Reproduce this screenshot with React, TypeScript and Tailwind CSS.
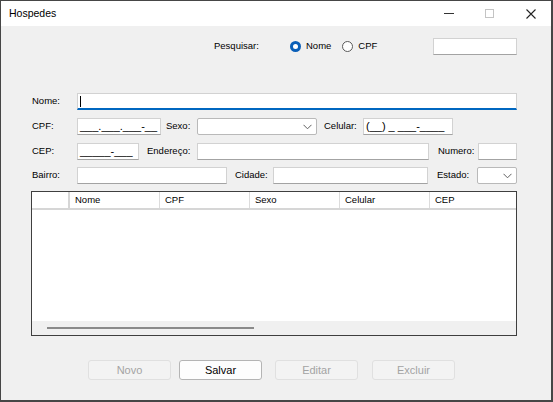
import { ReactNode } from "react"

function Box({ className = "", children }: { className?: string; children?: ReactNode }) {
  return (
    <div className={`h-[17px] bg-white border border-[#d2d2d2] border-b-[#a3a3a3] flex items-center overflow-hidden ${className}`}>
      {children}
    </div>
  )
}

function Combo({ className = "" }: { className?: string }) {
  return (
    <div className={`h-[17px] bg-white border border-[#b9b9b9] rounded-[2px] flex items-center justify-end pr-[4px] ${className}`}>
      <svg width="9" height="6" viewBox="0 0 9 6" fill="none">
        <polyline points="0.5,0.8 4.5,4.8 8.5,0.8" stroke="#606060" strokeWidth="1" />
      </svg>
    </div>
  )
}

function Mask({ text }: { text: string }) {
  return <span className="pl-[2px] text-[11px] leading-none text-black whitespace-pre">{text}</span>
}

function Radio({ checked, label }: { checked: boolean; label: string }) {
  return (
    <div className="flex items-center">
      {checked ? (
        <div className="w-[11px] h-[11px] rounded-full bg-[#0a5fb8] flex items-center justify-center">
          <div className="w-[5px] h-[5px] rounded-full bg-white" />
        </div>
      ) : (
        <div className="w-[11px] h-[11px] rounded-full border border-[#5a5a5a] bg-white" />
      )}
      <span className="ml-[5px]">{label}</span>
    </div>
  )
}

function Btn({ label, enabled = false, className = "" }: { label: string; enabled?: boolean; className?: string }) {
  return (
    <div
      className={`${enabled ? "bg-[#fdfdfd] border-[#b4b4b4] text-black" : "bg-[#f3f3f3] border-[#e0e0e0] text-[#a3a3a3]"} w-[83px] h-[20px] border rounded-[3px] flex items-center justify-center text-[11px] ${className}`}
    >
      {label}
    </div>
  )
}

const columns = ["Nome", "CPF", "Sexo", "Celular", "CEP"]

export default function App() {
  return (
    <div className="w-[553px] h-[402px] bg-[#f0f0f0] border-l border-t border-r-2 border-b-2 border-[#464646] flex flex-col text-[9.5px] text-black font-['Liberation_Sans',Arial,sans-serif]">
      <div className="h-[25px] bg-white flex items-center">
        <span className="pl-[8px] text-[10.5px]">Hospedes</span>
        <div className="ml-auto flex">
          <div className="w-[41px] h-[25px] flex items-center justify-center">
            <div className="w-[10px] h-[1px] bg-[#333]" />
          </div>
          <div className="w-[41px] h-[25px] flex items-center justify-center">
            <div className="w-[9px] h-[9px] border border-[#c4c4c4]" />
          </div>
          <div className="w-[41px] h-[25px] flex items-center justify-center">
            <svg width="10" height="10" viewBox="0 0 10 10">
              <path d="M0.5 0.5 L9.5 9.5 M9.5 0.5 L0.5 9.5" stroke="#222" strokeWidth="1.1" />
            </svg>
          </div>
        </div>
      </div>

      <div className="flex-1 flex flex-col pl-[30px] pr-[34px]">
        <div className="mt-[12px] h-[17px] flex items-center">
          <span className="ml-[183px] w-[76px]">Pesquisar:</span>
          <Radio checked label="Nome" />
          <div className="ml-[11px]">
            <Radio checked={false} label="CPF" />
          </div>
          <Box className="ml-auto w-[84px]" />
        </div>

        <div className="mt-[38px] h-[17px] flex items-center">
          <span className="w-[46px] pl-[1px]">Nome:</span>
          <div className="flex-1 h-[17px] bg-white border border-[#d2d2d2] border-b-2 border-b-[#0067c0] flex items-center">
            <div className="ml-[2px] w-[1px] h-[11px] bg-black" />
          </div>
        </div>

        <div className="mt-[8px] h-[17px] flex items-center">
          <span className="w-[46px] pl-[1px]">CPF:</span>
          <Box className="w-[84px]">
            <Mask text="___.___.___-__" />
          </Box>
          <span className="ml-[5px] w-[31px]">Sexo:</span>
          <Combo className="w-[120px]" />
          <span className="ml-[7px] w-[39px]">Celular:</span>
          <Box className="w-[90px]">
            <Mask text="(__) _ ___-____" />
          </Box>
        </div>

        <div className="mt-[8px] h-[17px] flex items-center">
          <span className="w-[46px] pl-[1px]">CEP:</span>
          <Box className="w-[62px]">
            <Mask text="_____-___" />
          </Box>
          <span className="ml-[8px] w-[50px]">Endereço:</span>
          <Box className="w-[232px]" />
          <span className="ml-[9px] w-[40px]">Numero:</span>
          <Box className="w-[39px]" />
        </div>

        <div className="mt-[7px] h-[17px] flex items-center">
          <span className="w-[46px] pl-[1px]">Bairro:</span>
          <Box className="w-[150px]" />
          <span className="ml-[8px] w-[38px]">Cidade:</span>
          <Box className="w-[155px]" />
          <span className="ml-[9px] w-[40px]">Estado:</span>
          <Combo className="w-[40px]" />
        </div>

        <div className="mt-[7px] h-[145px] border border-[#3f3f3f] bg-white flex flex-col overflow-hidden">
          <div className="h-[18px] flex border-b-2 border-[#d6d6d6] overflow-hidden">
            <div className="w-[38px] shrink-0 border-r-2 border-[#d6d6d6]" />
            {columns.map((c) => (
              <div key={c} className="w-[90px] shrink-0 border-r border-[#dcdcdc] pl-[5px] flex items-center">
                {c}
              </div>
            ))}
          </div>
          <div className="flex-1" />
          <div className="h-[14px] bg-[#f0f0f0] flex items-center">
            <div className="ml-[15px] w-[207px] h-[2px] bg-[#8a8a8a]" />
          </div>
        </div>

        <div className="mt-[24px] flex">
          <Btn label="Novo" className="ml-[57px]" />
          <Btn label="Salvar" enabled className="ml-[8px]" />
          <Btn label="Editar" className="ml-[13px]" />
          <Btn label="Excluir" className="ml-[14px]" />
        </div>
      </div>
    </div>
  )
}
